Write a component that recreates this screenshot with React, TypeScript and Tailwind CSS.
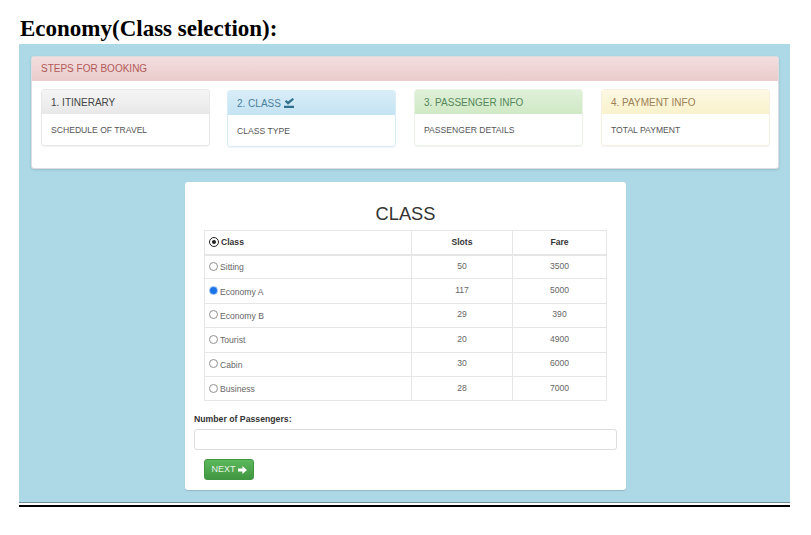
const steps = [
  { title: "1. ITINERARY", body: "SCHEDULE OF TRAVEL", outer: "border-[#e8e8e8]", head: "bg-gradient-to-b from-[#f5f5f5] to-[#e8e8e8] text-[#444]" },
  { title: "2. CLASS", body: "CLASS TYPE", outer: "border-[#d9edf7] mt-px -ml-px", head: "bg-gradient-to-b from-[#d9edf7] to-[#c4e3f3] text-[#4a7f9c]", check: true },
  { title: "3. PASSENGER INFO", body: "PASSENGER DETAILS", outer: "border-[#ebf3e4]", head: "bg-gradient-to-b from-[#dff0d8] to-[#d0e9c6] text-[#55875a]" },
  { title: "4. PAYMENT INFO", body: "TOTAL PAYMENT", outer: "border-[#f7efe0]", head: "bg-gradient-to-b from-[#fcf8e3] to-[#faf2cc] text-[#9b8055]" },
];

const rows = [
  { name: "Sitting", slots: "50", fare: "3500" },
  { name: "Economy A", slots: "117", fare: "5000", checked: true },
  { name: "Economy B", slots: "29", fare: "390" },
  { name: "Tourist", slots: "20", fare: "4900" },
  { name: "Cabin", slots: "30", fare: "6000" },
  { name: "Business", slots: "28", fare: "7000" },
];

function Radio({ checked }: { checked?: boolean }) {
  if (checked) {
    return (
      <span className="w-[9px] h-[9px] rounded-full border border-[#8ab4f0] flex items-center justify-center shrink-0">
        <span className="w-[7px] h-[7px] rounded-full bg-[#1a73e8]" />
      </span>
    );
  }
  return <span className="w-[9px] h-[9px] rounded-full bg-white border border-[#8f8f8f] shrink-0" />;
}

export default function App() {
  return (
    <div className="w-[811px] h-[535px] bg-white px-[19px] overflow-hidden font-['Liberation_Sans',Arial,sans-serif] text-[#333]">
      <h1 className="h-[44px] pt-[15px] pl-px text-[23px] leading-[27px] font-bold text-black font-['Liberation_Serif','Times_New_Roman',serif]">
        Economy(Class selection):
      </h1>

      <div className="w-[771px] h-[459px] bg-[#add8e6] border-b border-[#6f8f99] pl-3 pt-3">
        <div className="w-[748px] h-[113px] bg-white rounded-[3px] border border-[#ddd] shadow-sm overflow-hidden">
          <div className="h-[24px] px-[9px] flex items-center text-[10px] text-[#b05a58] border-b border-[#ebccd1] bg-gradient-to-b from-[#f2dede] to-[#ebcccc]">
            STEPS FOR BOOKING
          </div>
          <div className="flex gap-[18px] pl-[9px] pt-2">
            {steps.map((s) => (
              <div key={s.title} className={`w-[169px] h-[57px] shrink-0 rounded-[3px] border overflow-hidden shadow-[0_1px_1px_rgba(0,0,0,0.05)] ${s.outer}`}>
                <div className={`h-[24px] px-[9px] flex items-center gap-[3px] text-[10px] ${s.head}`}>
                  {s.title}
                  {s.check && (
                    <svg width="10" height="10" viewBox="0 0 10 10" className="fill-[#31708f]">
                      <path d="M0 7.8h10V10H0zM0.8 3.4l1.6-1.5 1.6 1.6L8.6 0 10 1.6 4 6.8 0.8 3.4z" />
                    </svg>
                  )}
                </div>
                <div className="px-[9px] pt-[10px] text-[8.6px] leading-[12px] text-[#555]">{s.body}</div>
              </div>
            ))}
          </div>
        </div>

        <div className="w-[441px] h-[308px] ml-[154px] mt-[13px] bg-white rounded-[3px] shadow-[0_1px_1px_rgba(0,0,0,0.15)] px-[9px]">
          <h2 className="pt-[22px] h-[48px] text-center text-[18.3px] leading-[20px] text-[#333]">CLASS</h2>
          <table className="w-[402px] mx-[10px] border-collapse table-fixed text-[8.6px] leading-[12px] text-[#666]">
            <colgroup>
              <col className="w-[207px]" />
              <col className="w-[101px]" />
              <col className="w-[94px]" />
            </colgroup>
            <thead>
              <tr className="h-[24px] text-[#333] font-bold">
                <th className="border border-[#e6e6e6] border-b-2 px-[4px] text-left">
                  <span className="flex items-center gap-[2px]">
                    <span className="w-[10px] h-[10px] rounded-full border border-[#222] flex items-center justify-center shrink-0">
                      <span className="w-[4px] h-[4px] rounded-full bg-[#222]" />
                    </span>
                    Class
                  </span>
                </th>
                <th className="border border-[#e6e6e6] border-b-2 text-center">Slots</th>
                <th className="border border-[#e6e6e6] border-b-2 text-center">Fare</th>
              </tr>
            </thead>
            <tbody>
              {rows.map((r) => (
                <tr key={r.name} className="h-[24.4px]">
                  <td className="border border-[#e6e6e6] px-[4px]">
                    <label className="flex items-center gap-[2px] -mt-px">
                      <Radio checked={r.checked} />
                      <span className="mt-[2px]">{r.name}</span>
                    </label>
                  </td>
                  <td className="border border-[#e6e6e6] text-center pb-[2px]">{r.slots}</td>
                  <td className="border border-[#e6e6e6] text-center pb-[2px]">{r.fare}</td>
                </tr>
              ))}
            </tbody>
          </table>
          <div className="mt-[12px] text-[8.7px] leading-[12px] font-bold text-[#333]">Number of Passengers:</div>
          <input className="block w-[423px] h-[21px] mt-[4px] bg-white border border-[#ddd] rounded-[3px] outline-none" />
          <button className="mt-[9px] ml-[10px] w-[50px] h-[21px] flex items-center justify-center gap-[2px] rounded-[3px] border border-[#419641] bg-gradient-to-b from-[#5cb85c] to-[#419641] text-[#e6f3e6] text-[9px]">
            NEXT
            <svg width="9" height="8" viewBox="0 0 9 8" className="fill-white">
              <path d="M0 2.4h4.4V0L9 4 4.4 8V5.6H0z" />
            </svg>
          </button>
        </div>
      </div>

      <div className="w-[771px] h-[2px] mt-[2px] bg-black" />
    </div>
  );
}
